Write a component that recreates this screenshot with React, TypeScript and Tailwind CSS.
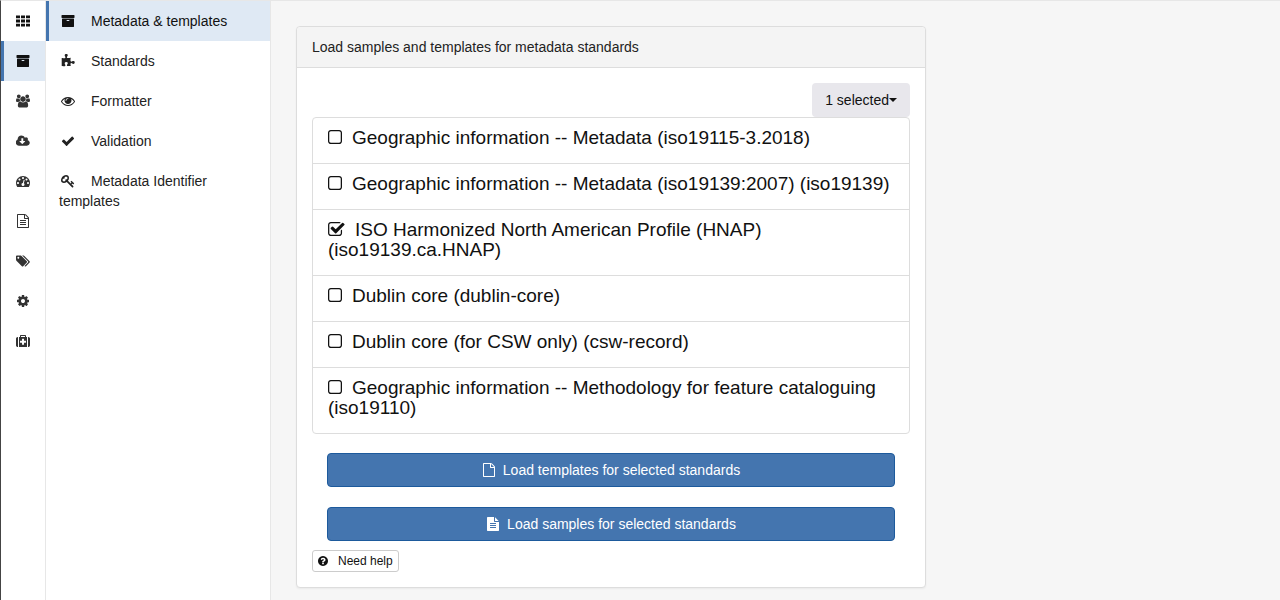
import { useState } from "react";
import type { ReactNode } from "react";

type IconName =
  | "th"
  | "archive"
  | "users"
  | "cloud"
  | "dashboard"
  | "fileText"
  | "tags"
  | "cog"
  | "medkit"
  | "puzzle"
  | "eye"
  | "check"
  | "key"
  | "file"
  | "fileSolid"
  | "question"
  | "square"
  | "checkSquare";

const ICONS: Record<IconName, { box: string; d: string }> = {
  th: {
    box: "0 0 14 14",
    d: "M0 1.5h4v2.8h-4zM5 1.5h4v2.8h-4zM10 1.5h4v2.8h-4zM0 5.6h4v2.8h-4zM5 5.6h4v2.8h-4zM10 5.6h4v2.8h-4zM0 9.7h4v2.8h-4zM5 9.7h4v2.8h-4zM10 9.7h4v2.8h-4z",
  },
  archive: {
    box: "0 0 1792 1792",
    d: "M1088 832q0-26-19-45t-45-19h-256q-26 0-45 19t-19 45 19 45 45 19h256q26 0 45-19t19-45zm576-192v960q0 26-19 45t-45 19h-1408q-26 0-45-19t-19-45v-960q0-26 19-45t45-19h1408q26 0 45 19t19 45zm64-448v256q0 26-19 45t-45 19h-1536q-26 0-45-19t-19-45v-256q0-26 19-45t45-19h1536q26 0 45 19t19 45z",
  },
  users: {
    box: "0 0 1920 1792",
    d: "M593 896q-162 5-265 128h-134q-82 0-138-40.5t-56-118.5q0-353 124-353 6 0 43.5 21t97.5 42.5 119 21.5q67 0 133-23-5 37-5 66 0 139 81 256zm1071 637q0 120-73 189.5t-194 69.5h-874q-121 0-194-69.5t-73-189.5q0-53 3.5-103.5t14-109 26.5-108.5 43-97.5 62-81 85.5-53.5 111.5-20q10 0 43 21.5t73 48 107 48 135 21.5 135-21.5 107-48 73-48 43-21.5q61 0 111.5 20t85.5 53.5 62 81 43 97.5 26.5 108.5 14 109 3.5 103.5zm-1024-1277q0 106-75 181t-181 75-181-75-75-181 75-181 181-75 181 75 75 181zm704 384q0 159-112.5 271.5t-271.5 112.5-271.5-112.5-112.5-271.5 112.5-271.5 271.5-112.5 271.5 112.5 112.5 271.5zm576 225q0 78-56 118.5t-138 40.5h-134q-103-123-265-128 81-117 81-256 0-29-5-66 66 23 133 23 59 0 119-21.5t97.5-42.5 43.5-21q124 0 124 353zm-128-609q0 106-75 181t-181 75-181-75-75-181 75-181 181-75 181 75 75 181z",
  },
  cloud: {
    box: "-32 0 1920 1792",
    d: "M1216 928q0-14-9-23t-23-9h-224v-352q0-13-9.5-22.5t-22.5-9.5h-192q-13 0-22.5 9.5t-9.5 22.5v352h-224q-13 0-22.5 9.5t-9.5 22.5q0 14 9 23l352 352q9 9 23 9t23-9l351-351q10-12 10-24zm640 224q0 159-112.5 271.5t-271.5 112.5h-1088q-185 0-316.5-131.5t-131.5-316.5q0-130 70-240t188-165q-2-30-2-43 0-212 150-362t362-150q156 0 285.5 87t188.5 231q71-62 166-62 106 0 181 75t75 181q0 76-41 138 130 31 213.5 135.5t83.5 238.5z",
  },
  dashboard: {
    box: "0 0 1792 1792",
    d: "M384 1152q0-53-37.5-90.5t-90.5-37.5-90.5 37.5-37.5 90.5 37.5 90.5 90.5 37.5 90.5-37.5 37.5-90.5zm192-448q0-53-37.5-90.5t-90.5-37.5-90.5 37.5-37.5 90.5 37.5 90.5 90.5 37.5 90.5-37.5 37.5-90.5zm428 481l101-382q6-26-7.5-48.5t-38.5-29.5-48 6.5-30 39.5l-101 382q-60 5-107 43.5t-63 98.5q-20 77 20 146t117 89 146-20 89-117q16-60-6-117t-72-91zm660-33q0-53-37.5-90.5t-90.5-37.5-90.5 37.5-37.5 90.5 37.5 90.5 90.5 37.5 90.5-37.5 37.5-90.5zm-640-640q0-53-37.5-90.5t-90.5-37.5-90.5 37.5-37.5 90.5 37.5 90.5 90.5 37.5 90.5-37.5 37.5-90.5zm448 192q0-53-37.5-90.5t-90.5-37.5-90.5 37.5-37.5 90.5 37.5 90.5 90.5 37.5 90.5-37.5 37.5-90.5zm320 448q0 261-141 483-19 29-54 29h-1402q-35 0-54-29-141-221-141-483 0-182 71-348t191-286 286-191 348-71 348 71 286 191 191 286 71 348z",
  },
  fileText: {
    box: "0 0 1792 1792",
    d: "M1596 380q28 28 48 76t20 88v1152q0 40-28 68t-68 28h-1344q-40 0-68-28t-28-68v-1600q0-40 28-68t68-28h896q40 0 88 20t76 48zm-444-244v376h376q-10-29-22-41l-313-313q-12-12-41-22zm384 1528v-1024h-416q-40 0-68-28t-28-68v-416h-768v1536h1280zM512 800q0-14 9-23t23-9h704q14 0 23 9t9 23v64q0 14-9 23t-23 9h-704q-14 0-23-9t-9-23v-64zm736 224q14 0 23 9t9 23v64q0 14-9 23t-23 9h-704q-14 0-23-9t-9-23v-64q0-14 9-23t23-9h704zm0 256q14 0 23 9t9 23v64q0 14-9 23t-23 9h-704q-14 0-23-9t-9-23v-64q0-14 9-23t23-9h704z",
  },
  tags: {
    box: "0 0 1920 1792",
    d: "M448 448q0-53-37.5-90.5t-90.5-37.5-90.5 37.5-37.5 90.5 37.5 90.5 90.5 37.5 90.5-37.5 37.5-90.5zm1067 576q0 53-37 90l-491 492q-39 37-91 37-53 0-90-37l-715-716q-38-37-64.5-101t-26.5-117v-416q0-52 38-90t90-38h416q53 0 117 26.5t102 64.5l715 714q37 39 37 91zm384 0q0 53-37 90l-491 492q-39 37-91 37-36 0-59-14t-53-45l470-470q37-37 37-90 0-52-37-91l-715-714q-38-38-102-64.5t-117-26.5h224q53 0 117 26.5t102 64.5l715 714q37 39 37 91z",
  },
  cog: {
    box: "0 0 1792 1792",
    d: "M1152 896q0-106-75-181t-181-75-181 75-75 181 75 181 181 75 181-75 75-181zm512-109v222q0 12-8 23t-20 13l-185 28q-19 54-39 91 35 50 107 138 10 12 10 25t-9 23q-27 37-99 108t-94 71q-12 0-26-9l-138-108q-44 23-91 38-16 136-29 186-7 28-36 28h-222q-14 0-24.5-8.5t-11.5-21.5l-28-184q-49-16-90-37l-141 107q-10 9-25 9-14 0-25-11-126-114-165-168-7-10-7-23 0-12 8-23 15-21 51-66.5t54-70.5q-27-50-41-99l-183-27q-13-2-21-12.5t-8-23.5v-222q0-12 8-23t19-13l186-28q14-46 39-92-40-57-107-138-10-12-10-24 0-10 9-23 26-36 98.5-107.5t94.5-71.5q13 0 26 10l138 107q44-23 91-38 16-136 29-186 7-28 36-28h222q14 0 24.5 8.5t11.5 21.5l28 184q49 16 90 37l142-107q9-9 24-9 13 0 25 10 129 119 165 170 7 8 7 22 0 12-8 23-15 21-51 66.5t-54 70.5q26 50 41 98l183 28q13 2 21 12.5t8 23.5z",
  },
  medkit: {
    box: "0 0 1792 1792",
    d: "M1280 1088v-192q0-14-9-23t-23-9h-224v-224q0-14-9-23t-23-9h-192q-14 0-23 9t-9 23v224h-224q-14 0-23 9t-9 23v192q0 14 9 23t23 9h224v224q0 14 9 23t23 9h192q14 0 23-9t9-23v-224h224q14 0 23-9t9-23zm-640-704h512v-128h-512v128zm-384 0v1280h-32q-92 0-158-66t-66-158v-832q0-92 66-158t158-66h32zm1152 0v1280h-1024v-1280h128v-160q0-40 28-68t68-28h576q40 0 68 28t28 68v160h128zm384 224v832q0 92-66 158t-158 66h-32v-1280h32q92 0 158 66t66 158z",
  },
  puzzle: {
    box: "0 0 1792 1792",
    d: "M1755 1083q0 81-44.5 135t-123.5 54q-41 0-77.5-17.5t-59-38-56.5-38-71-17.5q-110 0-110 124 0 39 16 115t15 115v5q-22 0-33 1-34 3-97.5 11.5t-115.5 13.5-98 5q-61 0-103-26.5t-42-83.5q0-37 17.5-71t38-56.5 38-59 17.5-77.5q0-79-54-123.5t-135-44.5q-84 0-143 45.5t-59 127.5q0 43 15 83t33.5 64.5 33.5 53 15 50.5q0 45-46 89-37 35-117 35-95 0-245-24-9-2-27.5-4t-27.5-4l-13-2q-1 0-3-1-2 0-2-1v-1024q2 1 17.5 3.5t34 5 21.5 3.5q150 24 245 24 80 0 117-35 46-44 46-89 0-22-15-50.5t-33.5-53-33.5-64.5-15-83q0-82 59-127.5t144-45.5q80 0 134 44.5t54 123.5q0 41-17.5 77.5t-38 59-38 56.5-17.5 71q0 57 42 83.5t103 26.5q64 0 180-15t163-17v2q-1 2-3.5 17.5t-5 34-3.5 21.5q-24 150-24 245 0 80 35 117 44 46 89 46 22 0 50.5-15t53-33.5 64.5-33.5 83-15q82 0 127.5 59t45.5 143z",
  },
  eye: {
    box: "0 0 1792 1792",
    d: "M1664 960q-152-236-381-353 61 104 61 225 0 185-131.5 316.5t-316.5 131.5-316.5-131.5-131.5-316.5q0-121 61-225-229 117-381 353 133 205 333.5 326.5t434.5 121.5 434.5-121.5 333.5-326.5zm-720-384q0-20-14-34t-34-14q-125 0-214.5 89.5t-89.5 214.5q0 20 14 34t34 14 34-14 14-34q0-86 61-147t147-61q20 0 34-14t14-34zm848 384q0 34-20 69-140 230-376.5 368.5t-499.5 138.5-499.5-139-376.5-368q-20-35-20-69t20-69q140-229 376.5-368t499.5-139 499.5 139 376.5 368q20 35 20 69z",
  },
  check: {
    box: "0 0 1792 1792",
    d: "M1671 566q0 40-28 68l-724 724-136 136q-28 28-68 28t-68-28l-136-136-362-362q-28-28-28-68t28-68l136-136q28-28 68-28t68 28l294 295 656-657q28-28 68-28t68 28l136 136q28 28 28 68z",
  },
  key: {
    box: "0 0 1792 1792",
    d: "M832 512q0-80-56-136t-136-56-136 56-56 136q0 42 19 83-41-19-83-19-80 0-136 56t-56 136 56 136 136 56 136-56 56-136q0-42-19-83 41 19 83 19 80 0 136-56t56-136zm851 704q0 17-49 66t-66 49q-9 0-28.5-16t-36.5-33-38.5-40-24.5-26l-96 96 220 220q28 28 28 68 0 42-39 81t-81 39q-40 0-68-28l-671-671q-176 131-365 131-163 0-265.5-102.5t-102.5-265.5q0-160 95-313t248-248 313-95q163 0 265.5 102.5t102.5 265.5q0 189-131 365l355 355 96-96q-3-3-26-24.5t-40-38.5-33-36.5-16-28.5q0-17 49-66t66-49q13 0 23 10 6 6 46 44.5t82 79.5 86.5 86 73 78 28.5 41z",
  },
  file: {
    box: "0 0 1792 1792",
    d: "M1596 380q28 28 48 76t20 88v1152q0 40-28 68t-68 28h-1344q-40 0-68-28t-28-68v-1600q0-40 28-68t68-28h896q40 0 88 20t76 48zm-444-244v376h376q-10-29-22-41l-313-313q-12-12-41-22zm384 1528v-1024h-416q-40 0-68-28t-28-68v-416h-768v1536h1280z",
  },
  fileSolid: {
    box: "0 0 1792 1792",
    d: "M1596 476q14 14 28 36h-472v-472q22 14 36 28zm-476 164h544v1056q0 40-28 68t-68 28h-1344q-40 0-68-28t-28-68v-1600q0-40 28-68t68-28h800v544q0 40 28 68t68 28zm160 736v-64q0-14-9-23t-23-9h-704q-14 0-23 9t-9 23v64q0 14 9 23t23 9h704q14 0 23-9t9-23zm0-256v-64q0-14-9-23t-23-9h-704q-14 0-23 9t-9 23v64q0 14 9 23t23 9h704q14 0 23-9t9-23zm0-256v-64q0-14-9-23t-23-9h-704q-14 0-23 9t-9 23v64q0 14 9 23t23 9h704q14 0 23-9t9-23z",
  },
  question: {
    box: "128 128 1536 1536",
    d: "M1024 1376v-192q0-14-9-23t-23-9h-192q-14 0-23 9t-9 23v192q0 14 9 23t23 9h192q14 0 23-9t9-23zm256-672q0-88-55.5-163t-138.5-116-170-41q-243 0-371 213-15 24 8 42l132 100q7 6 19 6 16 0 25-12 53-68 86-92 34-24 86-24 48 0 85.5 26t37.5 59q0 38-20 61t-68 45q-63 28-115.5 86.5t-52.5 125.5v36q0 14 9 23t23 9h192q14 0 23-9t9-23q0-19 21.5-49.5t54.5-49.5q32-18 49-28.5t46-35 44.5-48 28-60.5 12.5-81zm384 192q0 209-103 385.5t-279.5 279.5-385.5 103-385.5-103-279.5-279.5-103-385.5 103-385.5 279.5-279.5 385.5-103 385.5 103 279.5 279.5 103 385.5z",
  },
  square: {
    box: "192 128 1408 1408",
    d: "M1312 256h-832q-66 0-113 47t-47 113v832q0 66 47 113t113 47h832q66 0 113-47t47-113v-832q0-66-47-113t-113-47zm288 160v832q0 119-84.5 203.5t-203.5 84.5h-832q-119 0-203.5-84.5t-84.5-203.5v-832q0-119 84.5-203.5t203.5-84.5h832q119 0 203.5 84.5t84.5 203.5z",
  },
  checkSquare: {
    box: "64 128 1700 1408",
    d: "M1472 930v318q0 119-84.5 203.5t-203.5 84.5h-832q-119 0-203.5-84.5t-84.5-203.5v-832q0-119 84.5-203.5t203.5-84.5h832q63 0 117 25 15 7 18 23 3 17-9 29l-49 49q-10 10-23 10-3 0-9-2-23-6-45-6h-832q-66 0-113 47t-47 113v832q0 66 47 113t113 47h832q66 0 113-47t47-113v-254q0-13 9-22l64-64q10-10 23-10 6 0 12 3 20 8 20 29zm231-489l-814 814q-24 24-57 24t-57-24l-430-430q-24-24-24-57t24-57l110-110q24-24 57-24t57 24l263 263 647-647q24-24 57-24t57 24l110 110q24 24 24 57t-24 57z",
  },
};

function Icon({ name, className }: { name: IconName; className: string }) {
  return (
    <svg viewBox={ICONS[name].box} className={className} fill="currentColor" aria-hidden="true">
      <path d={ICONS[name].d} />
    </svg>
  );
}

const RAIL: { icon: IconName; label: string; active?: boolean; tone: string }[] = [
  { icon: "th", label: "Summary", tone: "text-[#111]" },
  { icon: "archive", label: "Metadata and templates", active: true, tone: "text-[#111]" },
  { icon: "users", label: "Users and groups", tone: "text-[#333]" },
  { icon: "cloud", label: "Harvesting", tone: "text-[#333]" },
  { icon: "dashboard", label: "Statistics and status", tone: "text-[#333]" },
  { icon: "fileText", label: "Reports", tone: "text-[#333]" },
  { icon: "tags", label: "Classification systems", tone: "text-[#333]" },
  { icon: "cog", label: "Settings", tone: "text-[#333]" },
  { icon: "medkit", label: "Tools", tone: "text-[#333]" },
];

const MENU: { icon: IconName; label: string; active?: boolean }[] = [
  { icon: "archive", label: "Metadata & templates", active: true },
  { icon: "puzzle", label: "Standards" },
  { icon: "eye", label: "Formatter" },
  { icon: "check", label: "Validation" },
  { icon: "key", label: "Metadata Identifier templates" },
];

const STANDARDS = [
  "Geographic information -- Metadata (iso19115-3.2018)",
  "Geographic information -- Metadata (iso19139:2007) (iso19139)",
  "ISO Harmonized North American Profile (HNAP) (iso19139.ca.HNAP)",
  "Dublin core (dublin-core)",
  "Dublin core (for CSW only) (csw-record)",
  "Geographic information -- Methodology for feature cataloguing (iso19110)",
];

function StandardRow({
  label,
  checked,
  onToggle,
}: {
  label: string;
  checked: boolean;
  onToggle: () => void;
}) {
  const size = checked ? "h-[14px] w-[17px]" : "h-[14px] w-[14px]";
  return (
    <li className="border-b border-[#ddd] px-[15px] pt-[10px] pb-[15px] last:border-b-0">
      <label className="block text-[19px] leading-[20px] font-medium text-[#111]">
        <span className="mr-[10px] inline-grid">
          <input
            type="checkbox"
            checked={checked}
            onChange={onToggle}
            className={`col-start-1 row-start-1 appearance-none ${size}`}
          />
          <Icon
            name={checked ? "checkSquare" : "square"}
            className={`pointer-events-none col-start-1 row-start-1 ${size}`}
          />
        </span>
        {label}
      </label>
    </li>
  );
}

function PrimaryButton({ icon, children }: { icon: IconName; children: ReactNode }) {
  return (
    <button
      type="button"
      className="flex h-[34px] items-center justify-center gap-[7px] rounded border border-[#1d5a9c] bg-[#4475af] text-[14px] font-medium text-white"
    >
      <Icon name={icon} className="size-[14px]" />
      {children}
    </button>
  );
}

export default function App() {
  const [selected, setSelected] = useState<number[]>([2]);
  const toggle = (i: number) =>
    setSelected((s) => (s.includes(i) ? s.filter((x) => x !== i) : [...s, i]));

  return (
    <div className="flex min-h-screen border-t border-l border-t-[#e7e7e7] border-l-[#444] bg-[#f6f6f6] font-['Liberation_Sans',Arial,sans-serif] text-[14px] leading-[20px] text-[#222]">
      <nav aria-label="Administration" className="w-[45px] shrink-0 border-r border-[#e7e7e7] bg-white">
        {RAIL.map((item) => (
          <a
            key={item.icon}
            href="#"
            aria-label={item.label}
            className={`flex h-[40px] items-center justify-center border-l-[3px] pr-[3px] ${item.tone} ${
              item.active ? "border-[#4475af] bg-[#dfe9f4]" : "border-transparent"
            }`}
          >
            <Icon name={item.icon} className="size-[14px]" />
          </a>
        ))}
      </nav>

      <nav aria-label="Section" className="w-[225px] shrink-0 border-r border-[#e7e7e7] bg-white">
        {MENU.map((item) => (
          <a
            key={item.label}
            href="#"
            className={`block border-l-[3px] p-[10px] ${
              item.active ? "border-[#4475af] bg-[#dfe9f4] text-[#111]" : "border-transparent"
            }`}
          >
            <Icon name={item.icon} className="mr-[14px] inline-block h-[14px] w-[18px] align-[-2px]" />
            {item.label}
          </a>
        ))}
      </nav>

      <main className="min-w-0 flex-1 pt-[25px] pr-[9px] pl-[10px]">
        <section className="w-2/3 px-[15px]">
          <div className="rounded border border-[#ddd] bg-white shadow-xs">
            <h1 className="rounded-t border-b border-[#ddd] bg-[#f4f4f4] px-[15px] py-[10px]">
              Load samples and templates for metadata standards
            </h1>
            <div className="p-[15px]">
              <div className="flex justify-end">
                <button
                  type="button"
                  className="flex h-[34px] items-center rounded bg-[#e8e7ec] px-[13px] text-[#111]"
                >
                  {selected.length} selected
                  <span className="border-x-4 border-t-4 border-x-transparent border-t-[#111]" />
                </button>
              </div>
              <ul className="rounded border border-[#ddd]">
                {STANDARDS.map((label, i) => (
                  <StandardRow
                    key={label}
                    label={label}
                    checked={selected.includes(i)}
                    onToggle={() => toggle(i)}
                  />
                ))}
              </ul>
              <div className="mt-[19px] mb-[9px] flex flex-col gap-[20px] px-[15px]">
                <PrimaryButton icon="file">Load templates for selected standards</PrimaryButton>
                <PrimaryButton icon="fileSolid">Load samples for selected standards</PrimaryButton>
              </div>
              <button
                type="button"
                className="flex h-[22px] items-center gap-[10px] rounded-[3px] border border-[#ccc] bg-white px-[5px] text-[12px] text-[#111]"
              >
                <Icon name="question" className="size-[10px]" />
                Need help
              </button>
            </div>
          </div>
        </section>
      </main>
    </div>
  );
}
